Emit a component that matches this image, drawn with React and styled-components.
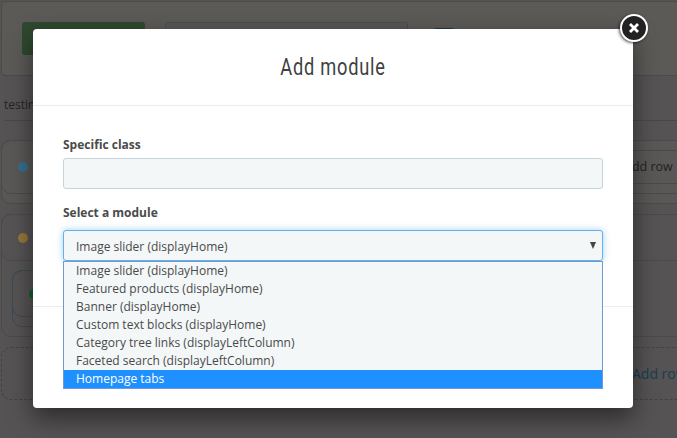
import React from "react";
import styled, { createGlobalStyle } from "styled-components";

const GlobalStyle = createGlobalStyle`
  * { box-sizing: border-box; }
  body {
    margin: 0;
    background: #565354;
    font-family: "Open Sans", "Noto Sans", sans-serif;
    font-size: 12px;
    color: #4a4a4a;
    overflow: hidden;
  }
`;

const Screen = styled.div`
  position: relative;
  width: 677px;
  height: 438px;
  overflow: hidden;
`;

const Builder = styled.main`
  display: flex;
  flex-direction: column;
  width: 760px;
  padding: 1px 0 0 1px;
`;

const Toolbar = styled.section`
  display: flex;
  height: 75px;
  padding: 20px;
  border: 1px solid #4b4b4b;
  border-radius: 5px;
  background: #5b5a57;
`;

const SaveButton = styled.div`
  width: 123px;
  height: 33px;
  border-radius: 3px;
  background: #2f482f;
`;

const NameField = styled.div`
  width: 243px;
  height: 33px;
  margin-left: 20px;
  border: 1px solid #4b4c4d;
  border-radius: 3px;
  background: #585757;
`;

const ToggleMark = styled.div`
  width: 24px;
  height: 22px;
  margin: 6px 0 0 24px;
  border-radius: 5px;
  background: #173b4d;
`;

const HookName = styled.div`
  height: 45px;
  margin-left: 3px;
  padding-top: 20px;
  border-bottom: 1px solid #494848;
  line-height: 18px;
  color: #252425;
`;

const Row = styled.section`
  height: ${(p) => p.$height}px;
  margin-top: ${(p) => p.$gap}px;
  border: 1px solid #4a4b4b;
  border-radius: 10px;
  background: ${(p) => p.$fill || "transparent"};
`;

const RowHead = styled.header`
  display: flex;
  justify-content: space-between;
  align-items: center;
  height: ${(p) => p.$height}px;
  margin: -1px;
  padding-left: 16px;
  border: 1px solid #4a4b4b;
  border-radius: 10px;
`;

const Dot = styled.span`
  width: 10px;
  height: 10px;
  border-radius: 50%;
  background: ${(p) => p.$color};
`;

const RowButton = styled.div`
  width: 150px;
  height: 34px;
  padding-left: 14px;
  border: 1px solid #494a4a;
  line-height: 31px;
  font-size: 12.5px;
  color: #222;
`;

const Column = styled.div`
  width: 600px;
  height: 57px;
  margin: 10px;
  border: 1px solid #3d4a52;
  border-radius: 10px;
`;

const ColumnHead = styled(RowHead)`
  border-color: #3d4a52;
`;

const AddRow = styled.div`
  height: 53px;
  margin-top: 10px;
  padding-left: 630px;
  border: 1px dashed #434142;
  border-radius: 10px;
  line-height: 52px;
  font-size: 14px;
  color: #173e52;
`;

const Modal = styled.div`
  position: absolute;
  left: 33px;
  top: 29px;
  width: 600px;
  height: 379px;
  border-radius: 4px;
  background: #fff;
  box-shadow: 0 10px 25px rgba(0, 0, 0, 0.5);
`;

const ModalHeader = styled.header`
  height: 77px;
  border-bottom: 1px solid #ececec;
  text-align: center;
`;

const Title = styled.h1`
  margin: 0;
  font: 400 24px/76px "Ubuntu Condensed", Roboto, sans-serif;
  letter-spacing: 1px;
  color: #414141;
  transform: scaleX(0.76);
`;

const ModalBody = styled.div`
  display: flex;
  flex-direction: column;
  height: 201px;
  padding: 30px 30px 0;
  border-bottom: 1px solid #ececec;
`;

const Label = styled.label`
  height: 18px;
  margin-bottom: ${(p) => p.$gap}px;
  line-height: 18px;
  font-weight: 700;
`;

const Field = styled.div`
  display: flex;
  justify-content: space-between;
  flex: none;
  height: 31px;
  padding: 0 6px 0 12px;
  border: 1px solid ${(p) => (p.$focused ? "#66afe9" : "#c3d4dc")};
  border-radius: 3px;
  background: #f3f7f8;
  box-shadow: ${(p) => (p.$focused ? "0 0 7px rgba(102, 175, 233, 0.6)" : "none")};
  line-height: 31px;
`;

const Arrow = styled.svg`
  width: 6px;
  height: 7px;
  margin-top: 11px;
`;

const FieldGroup = styled.div`
  display: flex;
  flex-direction: column;
  margin-bottom: 15px;
`;

const OptionList = styled.ul`
  position: absolute;
  left: 30px;
  top: 232px;
  width: 540px;
  height: 128px;
  margin: 0;
  padding: 0;
  border: 1px solid #7497d6;
  background: #f3f7f8;
  list-style: none;
`;

const Option = styled.li`
  height: 18px;
  padding-left: 12px;
  line-height: 18px;
  color: ${(p) => (p.$active ? "#fff" : "#4a4a4a")};
  background: ${(p) => (p.$active ? "#1e90ff" : "transparent")};
`;

const CloseButton = styled.button`
  position: absolute;
  right: -15px;
  top: -15px;
  display: grid;
  place-items: center;
  width: 28px;
  height: 28px;
  padding: 0;
  border: 2px solid #fff;
  border-radius: 50%;
  background: #222;
  box-shadow: -1px 1px 3px rgba(0, 0, 0, 0.65);
`;

const options = [
  "Image slider (displayHome)",
  "Featured products (displayHome)",
  "Banner (displayHome)",
  "Custom text blocks (displayHome)",
  "Category tree links (displayLeftColumn)",
  "Faceted search (displayLeftColumn)",
  "Homepage tabs",
];

export default function App() {
  return (
    <Screen>
      <GlobalStyle />
      <Builder>
        <Toolbar>
          <SaveButton />
          <NameField />
          <ToggleMark />
        </Toolbar>
        <HookName>testing</HookName>
        <Row $height={64} $gap={19} $fill="#5a5856">
          <RowHead $height={54}>
            <Dot $color="#346f8a" />
            <RowButton>Add row</RowButton>
          </RowHead>
        </Row>
        <Row $height={123} $gap={10}>
          <RowHead $height={47}>
            <Dot $color="#94783a" />
          </RowHead>
          <Column>
            <ColumnHead $height={47}>
              <Dot $color="#0c6428" />
            </ColumnHead>
          </Column>
        </Row>
        <AddRow>Add row</AddRow>
      </Builder>
      <Modal>
        <ModalHeader>
          <Title>Add module</Title>
        </ModalHeader>
        <ModalBody>
          <FieldGroup>
            <Label $gap={4}>Specific class</Label>
            <Field />
          </FieldGroup>
          <Label $gap={8}>Select a module</Label>
          <Field $focused>
            <span>{options[0]}</span>
            <Arrow viewBox="0 0 6 7">
              <path d="M0 0h6L3 7z" fill="#444" />
            </Arrow>
          </Field>
        </ModalBody>
        <OptionList>
          {options.map((option) => (
            <Option key={option} $active={option === "Homepage tabs"}>
              {option}
            </Option>
          ))}
        </OptionList>
        <CloseButton aria-label="Close">
          <svg width="12" height="12" viewBox="0 0 12 12">
            <path
              d="M2 2l8 8M10 2l-8 8"
              stroke="#fff"
              strokeWidth="2.8"
              strokeLinecap="butt"
            />
          </svg>
        </CloseButton>
      </Modal>
    </Screen>
  );
}
